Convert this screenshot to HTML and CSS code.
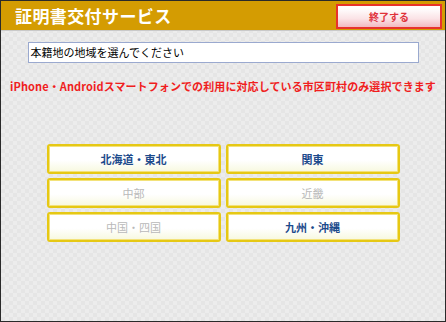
FILE: index.html
```html
<!DOCTYPE html>
<html lang="ja">
<head>
    <meta charset="UTF-8">
    <meta name="viewport" content="width=device-width, initial-scale=1.0">
    <title>証明書交付サービス</title>
    <link rel="stylesheet" href="styles.css">
</head>
<body>
    <div class="app_frame">
        <!-- Header -->
        <div class="app_header">
            <h1 class="app_title">証明書交付サービス</h1>
            <button class="end_button">終了する</button>
        </div>

        <div class="app_main">
            <div class="guide_box">本籍地の地域を選んでください</div>

            <p class="notice_text">iPhone・Androidスマートフォンでの利用に対応している市区町村のみ選択できます</p>

            <!-- Region Buttons -->
            <div class="region_grid">
                <button class="region_button">北海道・東北</button>
                <button class="region_button">関東</button>
                <button class="region_button region_disabled">中部</button>
                <button class="region_button region_disabled">近畿</button>
                <button class="region_button region_disabled">中国・四国</button>
                <button class="region_button">九州・沖縄</button>
            </div>
        </div>
    </div>
</body>
</html>
```

FILE: styles.css
```css
* {
    margin: 0;
    padding: 0;
    box-sizing: border-box;
    font-family: "Noto Sans CJK JP", "Noto Sans", sans-serif;
}

body {
    width: 446px;
    height: 322px;
    background: #fff;
}

/* Outer Frame */
.app_frame {
    width: 446px;
    height: 322px;
    border: 1px solid #2a2a2a;
    display: flex;
    flex-direction: column;
    background-color: #e9e9e9;
    background-image: conic-gradient(#e5e5e5 25%, #ececec 0 50%, #e5e5e5 0 75%, #ececec 0);
    background-size: 8px 8px;
}

/* Header Bar */
.app_header {
    height: 30px;
    background: #d49c02;
    display: flex;
    justify-content: space-between;
    align-items: center;
    padding: 0 3px 0 14px;
    border-bottom: 1px solid #c9c9c9;
}

.app_title {
    color: #fff;
    font-size: 17px;
    font-weight: bold;
    line-height: 1;
    letter-spacing: 0.4px;
}

.end_button {
    width: 106px;
    height: 25px;
    border: 2px solid #e8332c;
    background: linear-gradient(#ffffff 10%, #fbe3e6 60%, #f2b9c0);
    color: #e0323a;
    font-size: 10px;
    font-weight: bold;
    cursor: pointer;
    margin-top: 1px;
}

/* Main Area */
.app_main {
    flex: 1;
    display: flex;
    flex-direction: column;
    align-items: center;
}

.guide_box {
    width: 391px;
    height: 21px;
    margin-top: 11px;
    background: #fff;
    border: 1px solid #9aa9cf;
    font-size: 11px;
    line-height: 19px;
    padding-left: 2px;
    color: #000;
}

.notice_text {
    margin-top: 15px;
    font-size: 11px;
    font-weight: bold;
    color: #f01e1e;
    line-height: 16px;
    letter-spacing: 0.1px;
    white-space: nowrap;
}

/* Region Button Grid */
.region_grid {
    margin-top: 50px;
    display: grid;
    grid-template-columns: repeat(2, 174px);
    grid-auto-rows: 30px;
    column-gap: 5px;
    row-gap: 4px;
}

.region_button {
    border: 2px solid #e6c814;
    border-radius: 3px;
    background: linear-gradient(#ffffff 55%, #f7f8de);
    box-shadow: inset 0 0 0 1px #f3e27a;
    color: #1d4b8c;
    font-size: 11px;
    font-weight: bold;
    cursor: pointer;
}

.region_disabled {
    color: #b9b9b9;
    font-weight: normal;
    cursor: default;
}
```
